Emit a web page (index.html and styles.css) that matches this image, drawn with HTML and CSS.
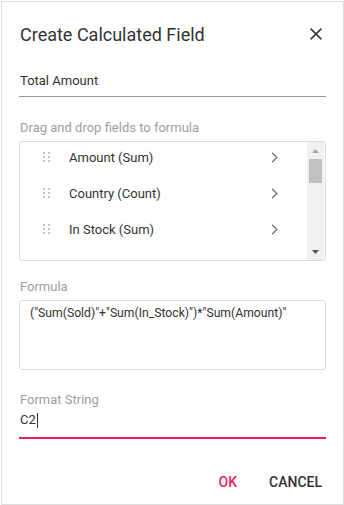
FILE: index.html
```html
<!DOCTYPE html>
<html>
<head>
<meta charset="utf-8">
<link rel="stylesheet" href="styles.css">
</head>
<body>
<div class="dialog">
  <div class="header">
    <div class="title">Create Calculated Field</div>
    <svg class="close" width="12" height="12" viewBox="0 0 12 12"><path d="M0.6 0.6L11.4 11.4M11.4 0.6L0.6 11.4" stroke="#333" stroke-width="1.5" fill="none"/></svg>
  </div>
  <div class="name-field">Total Amount</div>
  <div class="label drag-label">Drag and drop fields to formula</div>
  <div class="list">
    <div class="items">
      <div class="item"><svg class="grip" width="7" height="10" viewBox="0 0 7 10"><g fill="#c6c6c6"><rect x="0" y="0" width="2" height="2"/><rect x="5" y="0" width="2" height="2"/><rect x="0" y="4" width="2" height="2"/><rect x="5" y="4" width="2" height="2"/><rect x="0" y="8" width="2" height="2"/><rect x="5" y="8" width="2" height="2"/></g></svg><span class="text">Amount (Sum)</span><svg class="chev" width="7" height="11" viewBox="0 0 7 11"><path d="M1 0.8L5.8 5.5L1 10.2" stroke="#757575" stroke-width="1.4" fill="none"/></svg></div>
      <div class="item"><svg class="grip" width="7" height="10" viewBox="0 0 7 10"><g fill="#c6c6c6"><rect x="0" y="0" width="2" height="2"/><rect x="5" y="0" width="2" height="2"/><rect x="0" y="4" width="2" height="2"/><rect x="5" y="4" width="2" height="2"/><rect x="0" y="8" width="2" height="2"/><rect x="5" y="8" width="2" height="2"/></g></svg><span class="text">Country (Count)</span><svg class="chev" width="7" height="11" viewBox="0 0 7 11"><path d="M1 0.8L5.8 5.5L1 10.2" stroke="#757575" stroke-width="1.4" fill="none"/></svg></div>
      <div class="item"><svg class="grip" width="7" height="10" viewBox="0 0 7 10"><g fill="#c6c6c6"><rect x="0" y="0" width="2" height="2"/><rect x="5" y="0" width="2" height="2"/><rect x="0" y="4" width="2" height="2"/><rect x="5" y="4" width="2" height="2"/><rect x="0" y="8" width="2" height="2"/><rect x="5" y="8" width="2" height="2"/></g></svg><span class="text">In Stock (Sum)</span><svg class="chev" width="7" height="11" viewBox="0 0 7 11"><path d="M1 0.8L5.8 5.5L1 10.2" stroke="#757575" stroke-width="1.4" fill="none"/></svg></div>
      <div class="item"><svg class="grip" width="7" height="10" viewBox="0 0 7 10"><g fill="#c6c6c6"><rect x="0" y="0" width="2" height="2"/><rect x="5" y="0" width="2" height="2"/><rect x="0" y="4" width="2" height="2"/><rect x="5" y="4" width="2" height="2"/><rect x="0" y="8" width="2" height="2"/><rect x="5" y="8" width="2" height="2"/></g></svg><span class="text"></span><svg class="chev" width="7" height="11" viewBox="0 0 7 11"><path d="M1 0.8L5.8 5.5L1 10.2" stroke="#757575" stroke-width="1.4" fill="none"/></svg></div>
    </div>
    <div class="scrollbar">
      <div class="sb-btn"><svg width="7" height="4" viewBox="0 0 7 4"><path d="M0 4L3.5 0L7 4Z" fill="#a3a3a3"/></svg></div>
      <div class="track"><div class="thumb"></div></div>
      <div class="sb-btn"><svg width="7" height="4" viewBox="0 0 7 4"><path d="M0 0L3.5 4L7 0Z" fill="#505050"/></svg></div>
    </div>
  </div>
  <div class="label formula-label">Formula</div>
  <div class="formula">("Sum(Sold)"+"Sum(In_Stock)")*"Sum(Amount)"</div>
  <div class="label format-label">Format String</div>
  <div class="format-field">C2<span class="caret"></span></div>
  <div class="footer">
    <span class="btn ok">OK</span>
    <span class="btn cancel">CANCEL</span>
  </div>
</div>
</body>
</html>
```
FILE: styles.css
```css
html, body {
  margin: 0;
  padding: 0;
  background: #fff;
  font-family: Roboto, "Liberation Sans", sans-serif;
}
.dialog {
  margin: 1px 0 0 1px;
  width: 343px;
  height: 504px;
  box-sizing: border-box;
  border: 1px solid #dedede;
  background: #fff;
  padding: 0 17px;
}
.header {
  display: flex;
  align-items: center;
  justify-content: space-between;
  height: 64px;
}
.title {
  font-size: 18px;
  color: #333;
  padding-left: 1px;
}
.close {
  margin-right: 4px;
}
.name-field {
  font-size: 13px;
  color: #333;
  height: 30px;
  line-height: 30px;
  padding-left: 1px;
  border-bottom: 1px solid #9a9a9a;
}
.label {
  font-size: 13px;
  color: #9e9e9e;
  padding-left: 1px;
  height: 18px;
  line-height: 18px;
}
.drag-label {
  margin-top: 22px;
}
.list {
  margin-top: 4px;
  height: 120px;
  box-sizing: border-box;
  border: 1px solid #dcdcdc;
  border-radius: 3px;
  display: flex;
  overflow: hidden;
}
.items {
  flex: 1;
  overflow: hidden;
}
.items .item:first-child {
  margin-top: -3px;
}
.item {
  height: 36px;
  display: flex;
  align-items: center;
  font-size: 13px;
  color: #333;
}
.grip {
  flex: none;
  margin-left: 23px;
  margin-right: 19px;
}
.text {
  flex: 1;
}
.chev {
  flex: none;
  margin-right: 29px;
}
.scrollbar {
  width: 17px;
  background: #f1f1f1;
  display: flex;
  flex-direction: column;
  margin-right: 1px;
}
.sb-btn {
  height: 17px;
  flex: none;
  display: flex;
  align-items: center;
  justify-content: center;
}
.track {
  flex: 1;
}
.thumb {
  margin: 0 2px;
  height: 24px;
  background: #c1c1c1;
}
.formula-label {
  margin-top: 17px;
}
.formula {
  margin-top: 4px;
  height: 70px;
  box-sizing: border-box;
  border: 1px solid #dcdcdc;
  border-radius: 3px;
  font-size: 12.2px;
  color: #333;
  padding: 4px 10px;
  line-height: 16px;
}
.format-label {
  margin-top: 21px;
}
.format-field {
  font-size: 13px;
  color: #333;
  height: 22px;
  line-height: 22px;
  padding: 0 0 6px 1px;
  border-bottom: 2px solid #e91e63;
  display: flex;
  align-items: center;
}
.caret {
  display: inline-block;
  width: 1px;
  height: 15px;
  background: #333;
  margin-left: 1px;
}
.footer {
  display: flex;
  justify-content: flex-end;
  align-items: center;
  margin-top: 35px;
  gap: 32px;
  padding-right: 4px;
  line-height: 16px;
}
.btn {
  font-size: 14px;
  font-weight: 500;
}
.ok {
  color: #e91e63;
}
.cancel {
  color: #333;
}
```
